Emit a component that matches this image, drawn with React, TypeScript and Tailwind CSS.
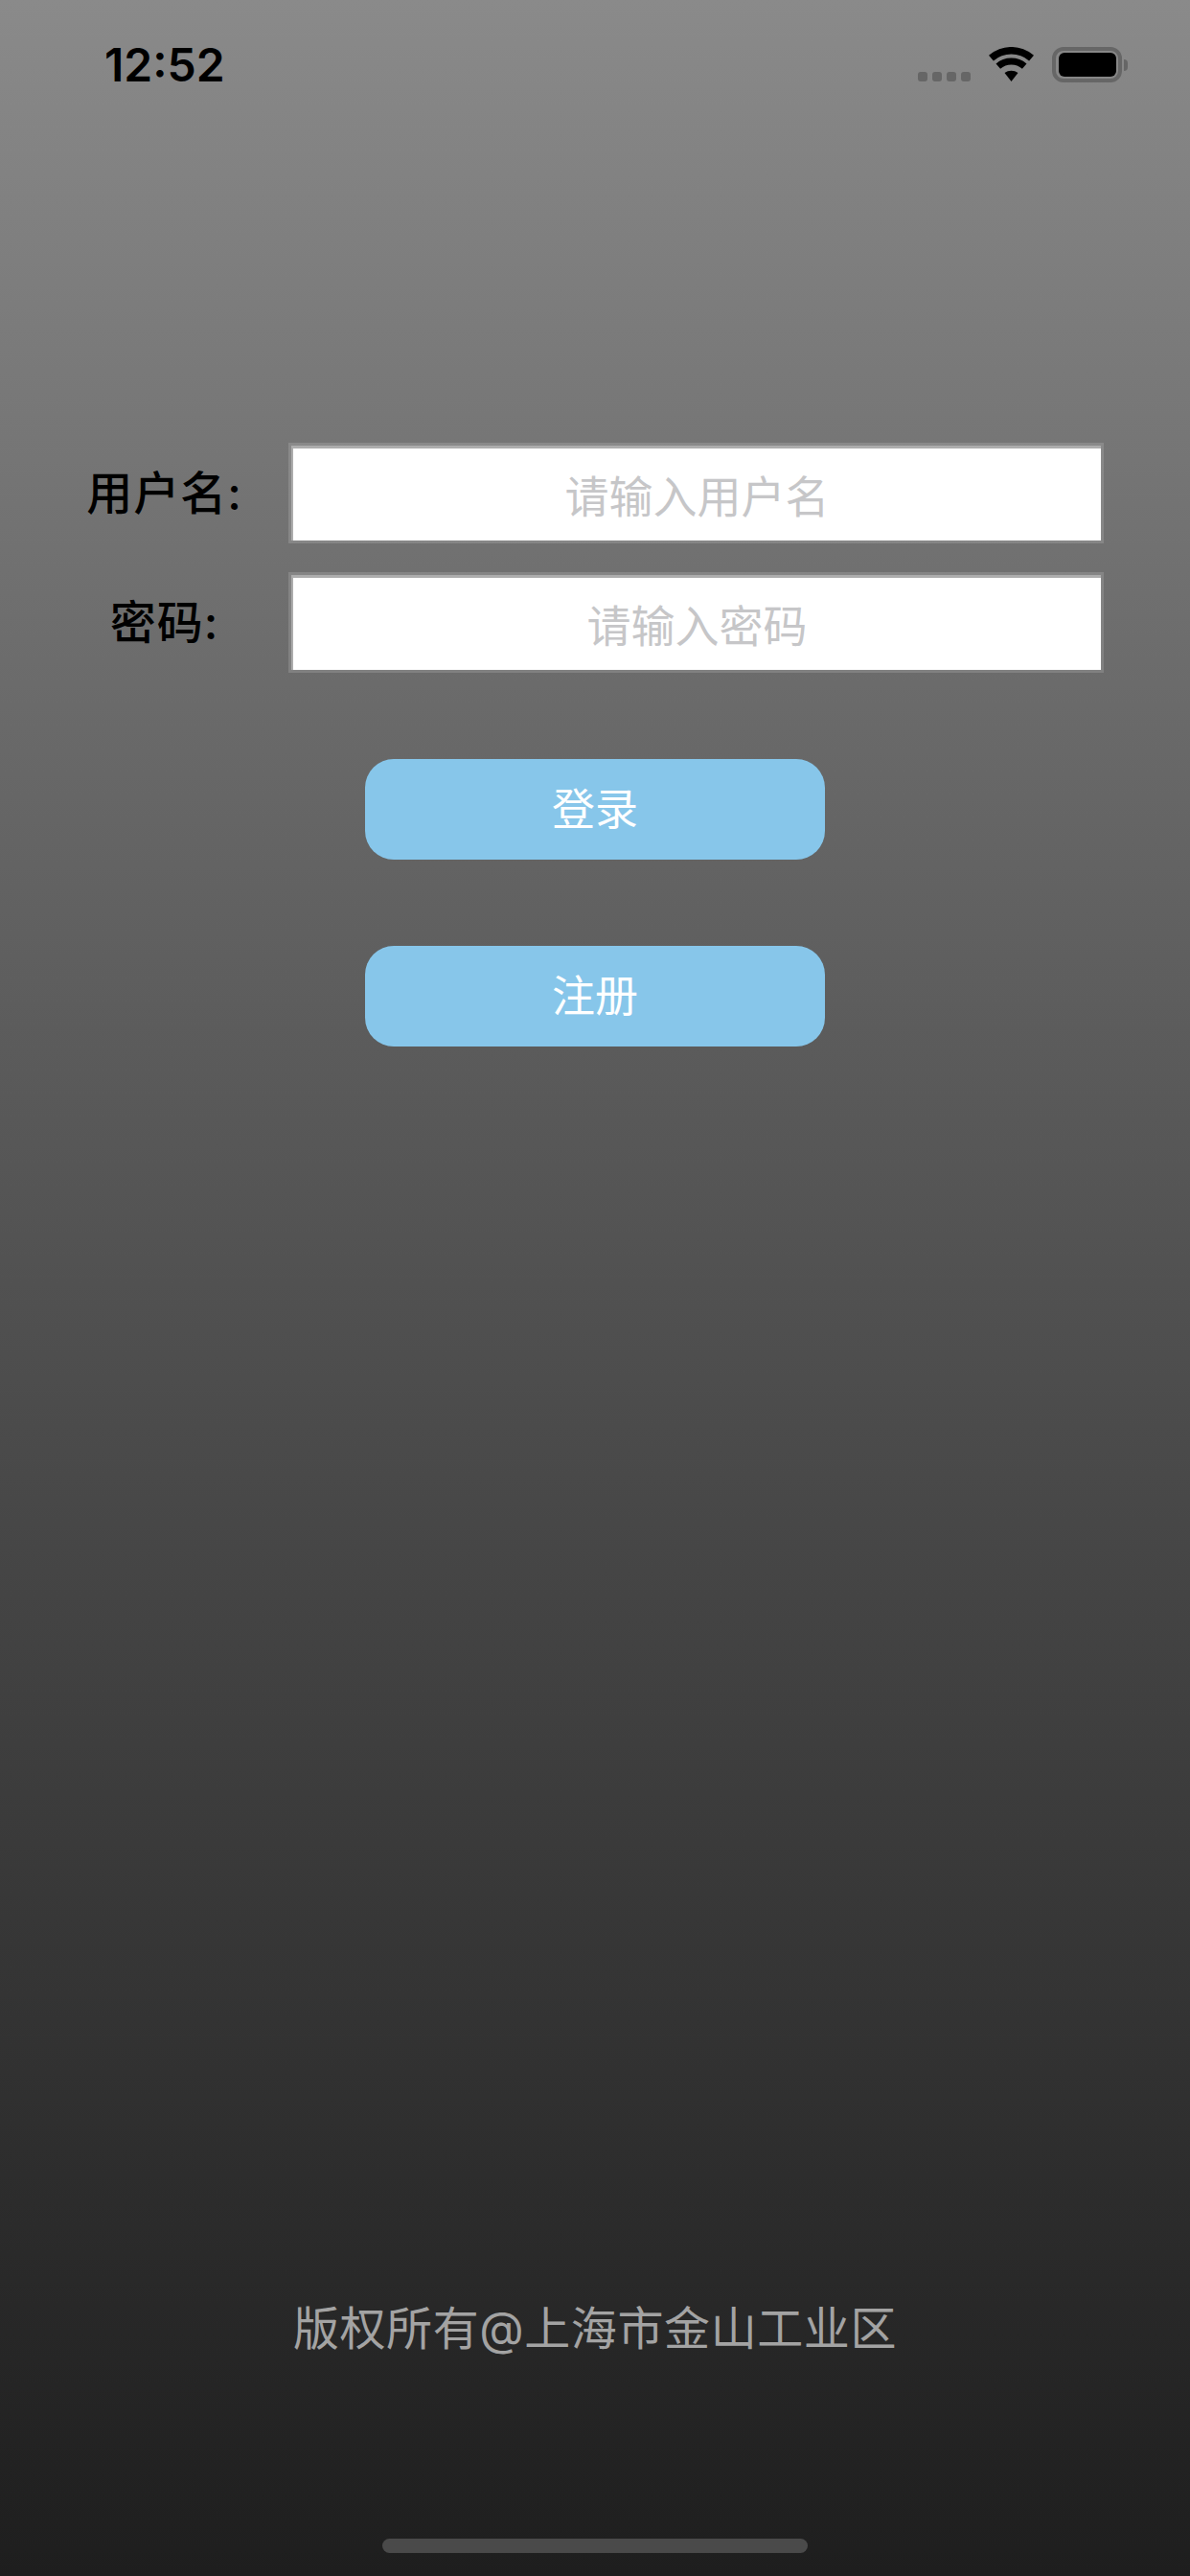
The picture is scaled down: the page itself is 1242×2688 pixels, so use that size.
export default function App() {
  const cjk = "font-['Inter','Noto_Sans_CJK_SC',sans-serif]";
  const boxClass = "flex h-[105px] w-[851px] border-[3px] border-white/15";
  const inputClass =
    "h-full w-full border-l-[2px] border-t-[3px] border-[#adadad] bg-white pt-1 text-center text-[46px] text-black outline-none placeholder:text-[#c6c6c8]";
  const labelClass = "w-[241px] pr-[18px] text-center text-[48px] font-medium leading-none tracking-[1px] text-black";
  return (
    <div className={`flex h-[2688px] w-full flex-col overflow-hidden bg-gradient-to-b from-[#8a8a8a] to-[#1e1e1e] ${cjk}`}>
      <div className="flex h-[140px] items-start justify-between pl-[109px] pr-[65px] pt-[49px]">
        <div className="text-[48px] font-semibold leading-[38px] text-black">12:52</div>
        <div className="flex items-end gap-[19px]">
          <div className="mb-[1px] flex gap-[5px]">
            <span className="h-[10px] w-[10px] rounded-[3px] bg-[#666666]" />
            <span className="h-[10px] w-[10px] rounded-[3px] bg-[#666666]" />
            <span className="h-[10px] w-[10px] rounded-[3px] bg-[#666666]" />
            <span className="h-[10px] w-[10px] rounded-[3px] bg-[#666666]" />
          </div>
          <svg width="47" height="36" viewBox="0 0 47 36" fill="#000" className="mb-[1px]">
            <path d="M0 8.7A36 36 0 0 1 47 8.7L42.1 14.4A28.5 28.5 0 0 0 4.9 14.4Z" />
            <path d="M7.5 17.5A24.5 24.5 0 0 1 39.5 17.5L34.9 22.8A17.5 17.5 0 0 0 12.1 22.8Z" />
            <path d="M16.5 27A12 12 0 0 1 30.5 27L23.5 36Z" />
          </svg>
          <div className="flex items-center">
            <div className="flex h-[37px] w-[73px] items-center justify-center rounded-[12px] border-[4px] border-[#666666]">
              <div className="h-[25px] w-[60px] rounded-[6px] bg-black" />
            </div>
            <div className="ml-[2px] h-[12px] w-[4px] rounded-r-[4px] bg-[#666666]" />
          </div>
        </div>
      </div>

      <div className="mt-[322px] flex flex-col gap-[30px] pl-[60px]">
        <div className="flex items-center">
          <label className={labelClass}>用户名:</label>
          <div className={boxClass}>
            <input className={inputClass} placeholder="请输入用户名" />
          </div>
        </div>
        <div className="flex items-center">
          <label className={labelClass}>密码:</label>
          <div className={boxClass}>
            <input className={inputClass} placeholder="请输入密码" />
          </div>
        </div>
      </div>

      <div className="mt-[90px] flex flex-col items-center gap-[90px]">
        <button className="h-[105px] w-[480px] rounded-[30px] bg-[#87c6ea] text-[45px] text-white">登录</button>
        <button className="h-[105px] w-[480px] rounded-[30px] bg-[#87c6ea] text-[45px] text-white">注册</button>
      </div>

      <div className="mt-auto flex flex-col items-center">
        <div className="text-[48px] leading-none tracking-[0.6px] text-[#a3a3a3]">版权所有@上海市金山工业区</div>
        <div className="mb-[24px] mt-[195px] h-[15px] w-[444px] rounded-full bg-[#4a4a4a]" />
      </div>
    </div>
  );
}
